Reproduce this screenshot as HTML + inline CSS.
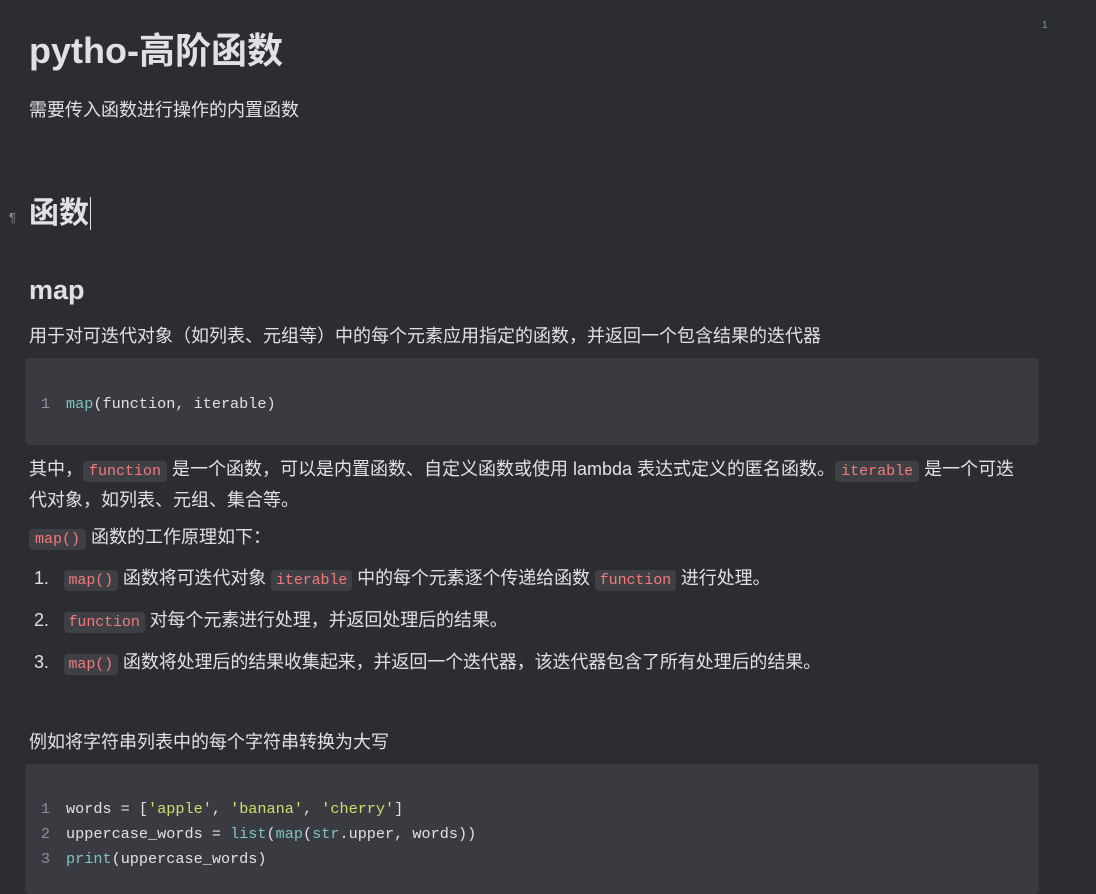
<!DOCTYPE html>
<html><head><meta charset="utf-8"><style>
body{margin:0;background:#2b2d30;width:1096px;height:885px;overflow:hidden;font-family:"Liberation Sans","Noto Sans CJK SC",sans-serif;color:#dfe1e5;position:relative}
.c{position:absolute;left:29px;}
h1{position:absolute;left:29px;top:22px;margin:0;font-size:36px;font-weight:bold;color:#dfe1e5}
.p{font-size:18px;line-height:26px;white-space:nowrap}
code{font-family:"Liberation Mono",monospace;font-size:15px;color:#f47a7a;background:#3e4045;border-radius:4px;padding:2px 6px}
ol code{padding:2px 5px}
.blk{position:absolute;left:25px;width:1014px;background:#393b40;border-radius:4px;font-family:"Liberation Mono",monospace;font-size:15.2px;color:#dfe1e5}
.ln{color:#8c8f96;display:inline-block;width:25px;text-align:right;padding-right:16px}
.l{position:absolute;left:0;height:25px;line-height:25px;white-space:pre}
.f{color:#7ec5b8}.s{color:#d8dd6a}
ol{position:absolute;left:30px;margin:0;padding:0;list-style:none;font-size:18px}
ol li{position:absolute;white-space:nowrap;letter-spacing:-0.1px}
</style></head><body>
<div style="position:absolute;left:1042px;top:20px;font-size:10px;color:#6e9ac8">1</div>
<h1>pytho-高阶函数</h1>
<div class="c p" style="top:97px">需要传入函数进行操作的内置函数</div>
<div style="position:absolute;left:9px;top:210px;font-size:13px;color:#8c8f96">¶</div>
<div class="c" style="top:194px;font-size:30px;font-weight:bold;line-height:40px">函数<span style="border-left:1px solid #dfe1e5;margin-left:1px"></span></div>
<div class="c" style="top:272px;font-size:27px;font-weight:bold;line-height:36px">map</div>
<div class="c p" style="top:323px">用于对可迭代对象（如列表、元组等）中的每个元素应用指定的函数，并返回一个包含结果的迭代器</div>
<div class="blk" style="top:358px;height:87px"><div class="l" style="top:34px"><span class="ln">1</span><span class="f">map</span>(function, iterable)</div></div>
<div class="c p" style="top:455px;line-height:28px">其中，<code>function</code> 是一个函数，可以是内置函数、自定义函数或使用 lambda 表达式定义的匿名函数。<code>iterable</code> 是一个可迭<br>代对象，如列表、元组、集合等。</div>
<div class="c p" style="top:524px"><code>map()</code> 函数的工作原理如下：</div>
<ol>
<li style="left:4px;top:564px">1.&nbsp;&nbsp;&nbsp;<code>map()</code> 函数将可迭代对象 <code>iterable</code> 中的每个元素逐个传递给函数 <code>function</code> 进行处理。</li>
<li style="left:4px;top:606px">2.&nbsp;&nbsp;&nbsp;<code>function</code> 对每个元素进行处理，并返回处理后的结果。</li>
<li style="left:4px;top:648px">3.&nbsp;&nbsp;&nbsp;<code>map()</code> 函数将处理后的结果收集起来，并返回一个迭代器，该迭代器包含了所有处理后的结果。</li>
</ol>
<div class="c p" style="top:729px">例如将字符串列表中的每个字符串转换为大写</div>
<div class="blk" style="top:764px;height:130px">
<div class="l" style="top:33px"><span class="ln">1</span>words = [<span class="s">'apple'</span>, <span class="s">'banana'</span>, <span class="s">'cherry'</span>]</div>
<div class="l" style="top:58px"><span class="ln">2</span>uppercase_words = <span class="f">list</span>(<span class="f">map</span>(<span class="f">str</span>.upper, words))</div>
<div class="l" style="top:83px"><span class="ln">3</span><span class="f">print</span>(uppercase_words)</div>
</div>
</body></html>
